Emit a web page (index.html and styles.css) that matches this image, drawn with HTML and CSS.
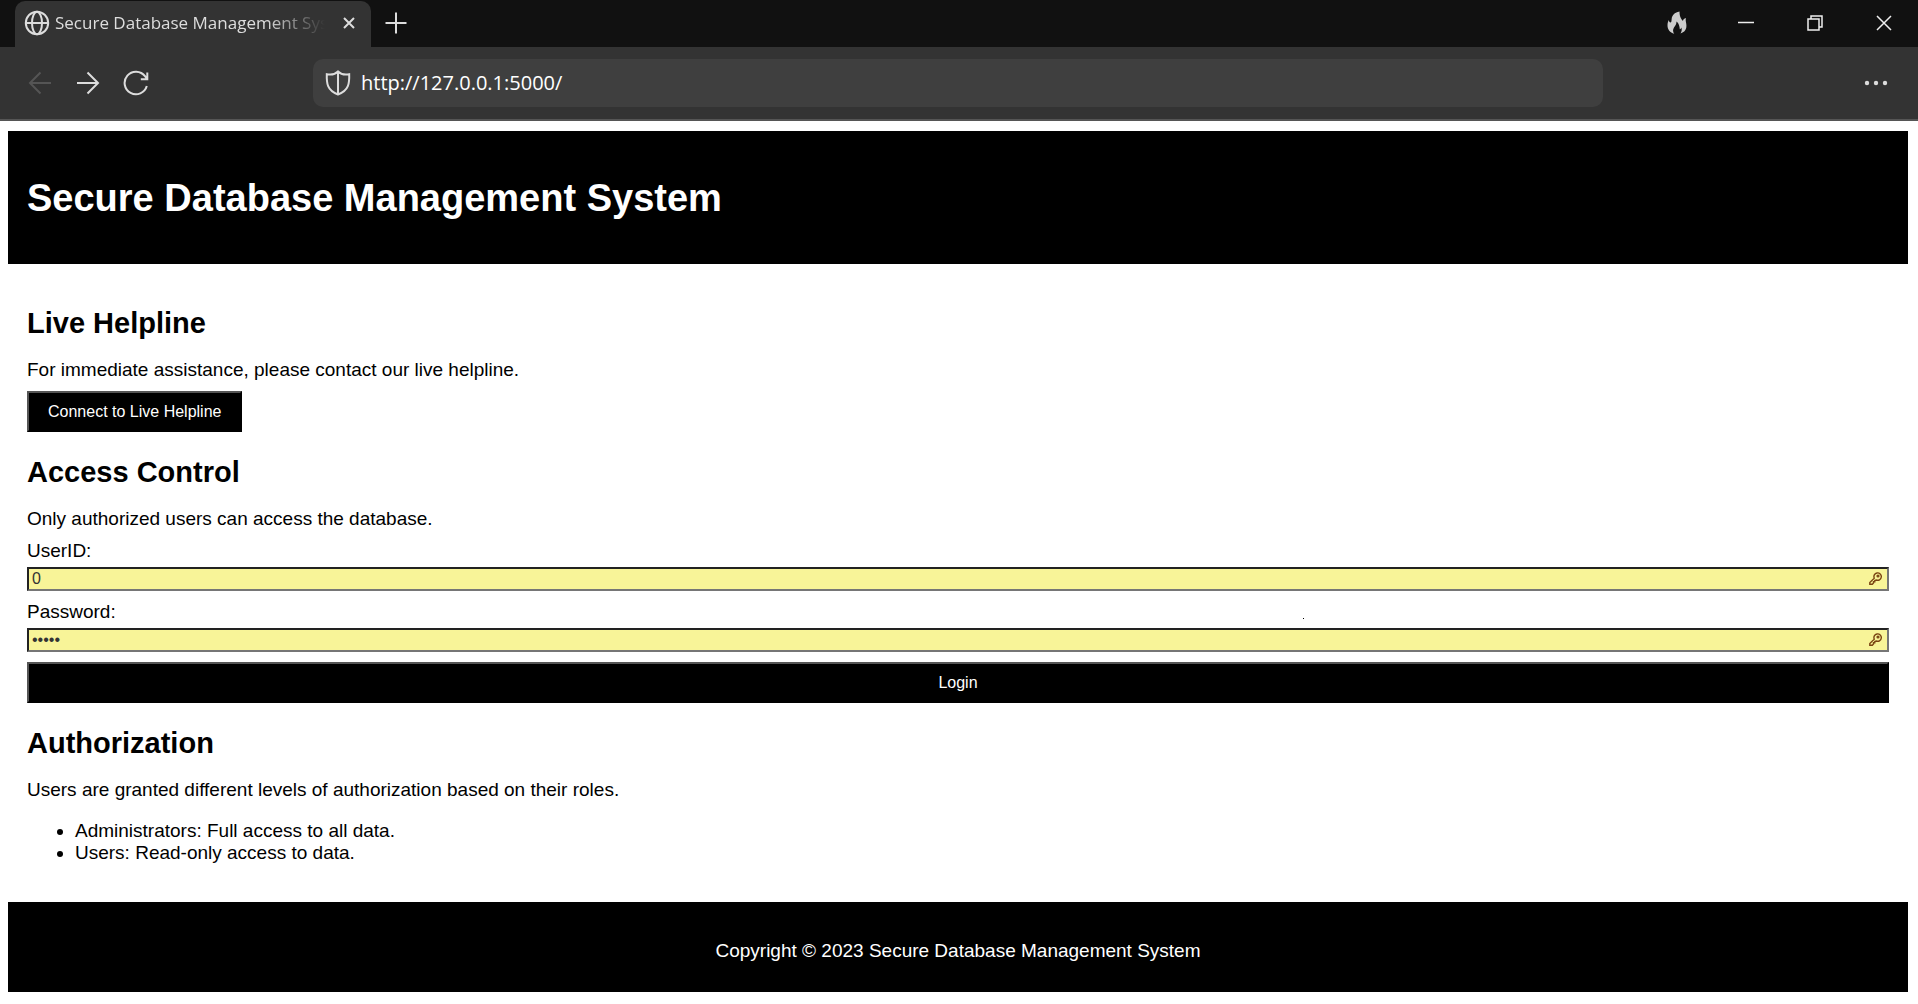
FILE: index.html
```html
<!DOCTYPE html>
<html lang="en">
<head>
<meta charset="utf-8">
<title>Secure Database Management System</title>
<link rel="stylesheet" href="styles.css">
</head>
<body>
<div class="browser">
  <div class="tab-strip">
    <div class="tab">
      <svg class="tab-globe" width="26" height="26" viewBox="0 0 26 26" aria-hidden="true"><circle cx="13" cy="13" r="11.2"/><ellipse cx="13" cy="13" rx="5" ry="11.2"/><path d="M2 13h22"/></svg>
      <span class="tab-title">Secure Database Management System</span>
      <button class="tab-close" type="button" aria-label="Close tab"><svg width="12" height="12" viewBox="0 0 12 12"><path d="M1 1l10 10M11 1L1 11"/></svg></button>
    </div>
    <button class="new-tab" type="button" aria-label="New tab"><svg width="22" height="22" viewBox="0 0 22 22"><path d="M11 0.500v21M0.500 11h21"/></svg></button>
    <div class="window-controls">
      <button type="button" aria-label="Clear data"><svg class="flame" width="20" height="24" viewBox="0 0 20 24"><path d="M12.500 0.500C12.500 4 13 6 15 9C15.500 10 16 10 16.300 9C16.600 8 17.500 7.500 19 7C18.300 9 19 11 19.300 13C20 18 18 21 13.500 22.500C15 20 15 18 14.300 16.500C14 17.500 13.500 18 12.800 18.200C12.500 15 12 12.500 9.500 10.500C9.500 13 8.500 14.500 7 16.500C5.500 18.800 6 21 7.200 22.800C3 21.500 0.500 18.500 0.500 14.500C0.500 12 1 10.500 1.800 9C2 10.500 2.500 11.500 3.500 11.500C5 11.300 4.300 8.500 5 6C6 3 9 1 12.500 0.500Z"/></svg></button>
      <button type="button" aria-label="Minimize"><svg width="16" height="16" viewBox="0 0 16 16"><path d="M0 7.500h16"/></svg></button>
      <button type="button" aria-label="Restore"><svg width="16" height="16" viewBox="0 0 16 16"><path d="M1 4h11v11H1zM4 4V1h11v11h-3"/></svg></button>
      <button type="button" aria-label="Close"><svg width="16" height="16" viewBox="0 0 16 16"><path d="M1 1l14 14M15 1L1 15"/></svg></button>
    </div>
  </div>
  <div class="toolbar">
    <div class="nav-buttons">
      <button class="is-off" type="button" aria-label="Back"><svg width="24" height="24" viewBox="0 0 24 24"><path d="M12.500 1.500L2 12l10.500 10.500M2 12h21"/></svg></button>
      <button type="button" aria-label="Forward"><svg width="24" height="24" viewBox="0 0 24 24"><path d="M11.500 1.500L22 12L11.500 22.500M22 12H1"/></svg></button>
      <button type="button" aria-label="Reload"><svg width="26" height="26" viewBox="0 0 26 26"><path d="M23.800 16A11.300 11.300 0 1 1 22 6.200L24 9M24.300 2.500V9.200H17.800"/></svg></button>
    </div>
    <div class="address">
      <svg width="26" height="26" viewBox="0 0 26 26" aria-hidden="true"><path d="M13 1.500C10.500 4 6 5 1.800 4.200C1.500 13 2 20.500 13 24.500C24 20.500 24.500 13 24.200 4.200C20 5 15.500 4 13 1.500ZM13 1.500v23"/></svg>
      <input type="text" aria-label="Address" value="http://127.0.0.1:5000/">
    </div>
    <button class="more" type="button" aria-label="More options"><svg width="24" height="6" viewBox="0 0 24 6"><circle cx="3" cy="3" r="2.200"/><circle cx="12" cy="3" r="2.200"/><circle cx="21" cy="3" r="2.200"/></svg></button>
  </div>
</div>
<div class="page">
  <header class="banner"><h1>Secure Database Management System</h1></header>
  <main>
    <section>
      <h2>Live Helpline</h2>
      <p>For immediate assistance, please contact our live helpline.</p>
      <button class="action" type="button">Connect to Live Helpline</button>
    </section>
    <section>
      <h2>Access Control</h2>
      <p>Only authorized users can access the database.</p>
      <form>
        <label for="userid">UserID:</label>
        <div class="field">
          <input id="userid" type="text" value="0">
          <svg class="key" width="13" height="13" viewBox="0 0 13 13" aria-hidden="true"><path d="M5.300 6.200A3.700 3.700 0 1 1 7.200 8L5.800 8.500V9.800H4.500V11L3.300 12.300H0.800V10.500Z"/><circle cx="9" cy="4" r="0.900"/></svg>
        </div>
        <label class="speck" for="password">Password:</label>
        <div class="field">
          <input id="password" type="password" value="admin">
          <svg class="key" width="13" height="13" viewBox="0 0 13 13" aria-hidden="true"><path d="M5.300 6.200A3.700 3.700 0 1 1 7.200 8L5.800 8.500V9.800H4.500V11L3.300 12.300H0.800V10.500Z"/><circle cx="9" cy="4" r="0.900"/></svg>
        </div>
        <button class="action" type="button">Login</button>
      </form>
    </section>
    <section>
      <h2>Authorization</h2>
      <p>Users are granted different levels of authorization based on their roles.</p>
      <ul>
        <li>Administrators: Full access to all data.</li>
        <li>Users: Read-only access to data.</li>
      </ul>
    </section>
  </main>
  <footer class="banner"><p>Copyright © 2023 Secure Database Management System</p></footer>
</div>
</body>
</html>
```
FILE: styles.css
```css
* { box-sizing: border-box; }

body {
  margin: 0;
  background: #fff;
  color: #000;
  font: 19px/22px "Liberation Sans", Arial, sans-serif;
}

h1, h2, p, ul { margin: 0; }

/* Browser frame */
.browser {
  color: #ddd;
  font-family: "Open Sans", "Noto Sans", sans-serif;
}
.browser button {
  display: flex;
  align-items: center;
  justify-content: center;
  padding: 0;
  border: 0;
  background: none;
  color: inherit;
}
.browser svg {
  display: block;
  flex: none;
  fill: none;
  stroke: currentColor;
  stroke-width: 2;
}

.tab-strip {
  display: flex;
  height: 47px;
  padding: 1px 0 0 15px;
  background: #111;
}
.tab {
  display: flex;
  align-items: center;
  width: 356px;
  padding: 0 12px 2px 9px;
  border-radius: 10px 10px 0 0;
  background: #333;
}
.tab-globe { margin-right: 5px; }
.tab-title {
  flex: 1;
  overflow: hidden;
  white-space: nowrap;
  font-size: 17px;
  line-height: 24px;
  -webkit-mask-image: linear-gradient(to right, #000 78%, transparent);
  mask-image: linear-gradient(to right, #000 78%, transparent);
}
.tab .tab-close {
  width: 20px;
  height: 24px;
  margin-left: 14px;
}
.browser .new-tab {
  width: 50px;
  padding-bottom: 2px;
}
.window-controls {
  display: flex;
  margin-left: auto;
  padding-bottom: 2px;
  color: #eee;
}
.window-controls button { width: 69px; }
.browser .window-controls svg { stroke-width: 1.5; }
.browser .window-controls .flame {
  fill: #ccc;
  stroke: none;
}

.toolbar {
  display: grid;
  grid-template-columns: 313px 1fr 315px;
  align-items: center;
  height: 74px;
  border-bottom: 2px solid #555;
  background: #333;
}
.nav-buttons {
  display: flex;
  padding-left: 16px;
}
.nav-buttons button {
  width: 48px;
  height: 48px;
}
.nav-buttons .is-off { color: #555; }
.address {
  display: flex;
  align-items: center;
  gap: 10px;
  height: 48px;
  padding: 0 12px;
  border-radius: 10px;
  background: #3f3f3f;
}
.address input {
  flex: 1;
  min-width: 0;
  padding: 0;
  border: 0;
  background: none;
  color: #fff;
  font-family: inherit;
  font-size: 20px;
  line-height: 28px;
}
.toolbar .more {
  width: 48px;
  height: 48px;
  margin-right: 18px;
  justify-self: end;
}
.toolbar .more svg {
  fill: currentColor;
  stroke: none;
}

/* Page */
.page { padding: 10px 10px 12px 8px; }
.banner {
  padding: 19px;
  background: #000;
  color: #fff;
}
h1 {
  padding: 27px 0 25px;
  font-size: 38px;
  line-height: 43px;
}
main { padding: 19px; }
h2 {
  padding: 24px 0 20px;
  font-size: 29px;
  line-height: 32px;
}
section p { margin-bottom: 10px; }
.action {
  height: 41px;
  padding: 0 19px;
  border: 2px outset #555;
  border-right-color: #000;
  border-bottom-color: #000;
  border-radius: 0;
  background: #000;
  color: #fff;
  font: 16px/18px "Liberation Sans", Arial, sans-serif;
}
form {
  display: flex;
  flex-direction: column;
}
label { margin-bottom: 5px; }
.speck { position: relative; }
.speck::after {
  content: "";
  position: absolute;
  top: 17px;
  left: 1276px;
  width: 1px;
  height: 1px;
  background: #000;
}
.field {
  position: relative;
  margin-bottom: 10px;
}
.field input {
  display: block;
  width: 100%;
  height: 24px;
  padding: 0 24px 0 3px;
  border: 2px solid #767676;
  border-top-color: #222;
  border-left-color: #222;
  border-radius: 0;
  background: #f8f498;
  color: #333;
  font: 16px/20px "Liberation Sans", Arial, sans-serif;
}
.key {
  position: absolute;
  top: 5px;
  right: 7px;
  fill: none;
  stroke: #7a4412;
  stroke-width: 1.4;
}
ul {
  padding: 9px 0 19px 48px;
}
footer.banner { text-align: center; }
footer p { padding: 19px 0 11px; }
```
